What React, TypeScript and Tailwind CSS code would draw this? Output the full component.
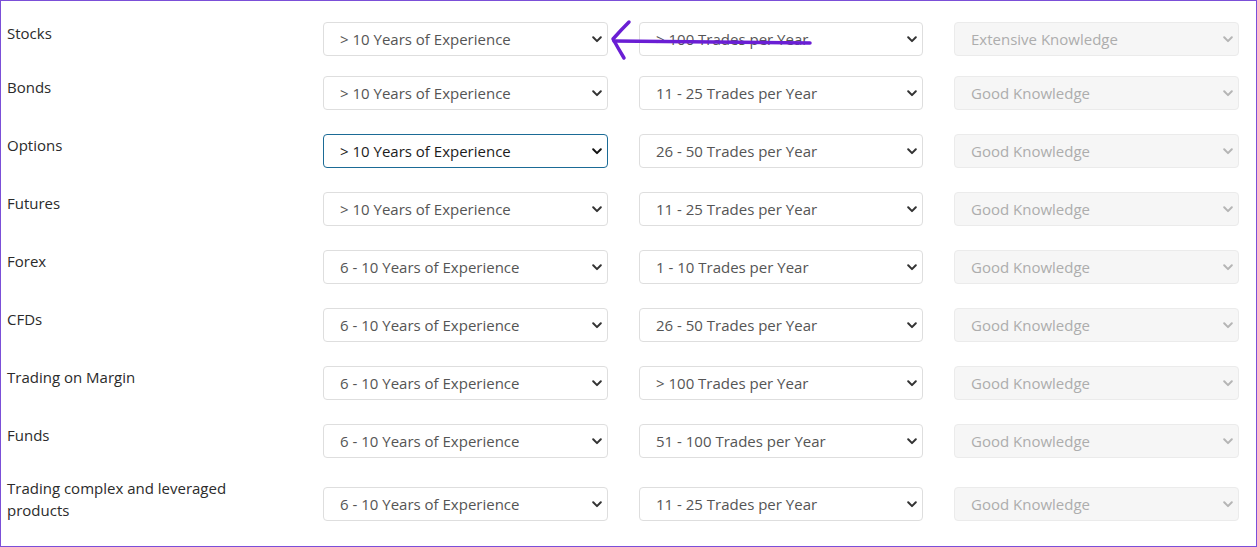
import React from 'react'

type Row = {
  label: string
  exp: string
  trades: string
  knowledge: string
  focused?: boolean
  rowClass?: string
  selectClass?: string
}

const rows: Row[] = [
  { label: 'Stocks', exp: '> 10 Years of Experience', trades: '> 100 Trades per Year', knowledge: 'Extensive Knowledge' },
  { label: 'Bonds', exp: '> 10 Years of Experience', trades: '11 - 25 Trades per Year', knowledge: 'Good Knowledge', rowClass: '-mt-1' },
  { label: 'Options', exp: '> 10 Years of Experience', trades: '26 - 50 Trades per Year', knowledge: 'Good Knowledge', focused: true },
  { label: 'Futures', exp: '> 10 Years of Experience', trades: '11 - 25 Trades per Year', knowledge: 'Good Knowledge' },
  { label: 'Forex', exp: '6 - 10 Years of Experience', trades: '1 - 10 Trades per Year', knowledge: 'Good Knowledge' },
  { label: 'CFDs', exp: '6 - 10 Years of Experience', trades: '26 - 50 Trades per Year', knowledge: 'Good Knowledge' },
  { label: 'Trading on Margin', exp: '6 - 10 Years of Experience', trades: '> 100 Trades per Year', knowledge: 'Good Knowledge' },
  { label: 'Funds', exp: '6 - 10 Years of Experience', trades: '51 - 100 Trades per Year', knowledge: 'Good Knowledge' },
  {
    label: 'Trading complex and leveraged products',
    exp: '6 - 10 Years of Experience',
    trades: '11 - 25 Trades per Year',
    knowledge: 'Good Knowledge',
    rowClass: '-mt-[5px]',
    selectClass: 'mt-[10px]',
  },
]

function Chevron({ color }: { color: string }) {
  return (
    <svg width="10" height="7" viewBox="0 0 10 7" className="pointer-events-none absolute right-[6px] top-[14px]">
      <path d="M1.2 1.3 L5 5.1 L8.8 1.3" fill="none" stroke={color} strokeWidth="2" strokeLinecap="round" strokeLinejoin="round" />
    </svg>
  )
}

function Select({
  value,
  focused,
  disabled,
  className = '',
}: {
  value: string
  focused?: boolean
  disabled?: boolean
  className?: string
}) {
  const base =
    'h-[34px] w-full appearance-none rounded-[4px] border pl-4 pr-6 text-[15px] leading-[32px] outline-none'
  const tone = disabled
    ? 'border-[#ebebeb] bg-[#f6f6f6] text-[#adadad]'
    : focused
      ? 'border-[#1b6b96] bg-white text-[#1c1c1c]'
      : 'border-[#dedede] bg-white text-[#555]'
  return (
    <div className={`relative ${className}`}>
      <select defaultValue={value} disabled={disabled} className={`${base} ${tone}`}>
        <option>{value}</option>
      </select>
      <Chevron color={disabled ? '#b5b5b5' : focused ? '#111' : '#333'} />
    </div>
  )
}

export default function App() {
  return (
    <div
      className="relative h-[547px] w-[1257px] overflow-hidden border border-[#7b4fd8] bg-white pl-[6px] pt-[21px]"
      style={{ fontFamily: '"Open Sans", "Liberation Sans", sans-serif' }}
    >
      <div className="flex flex-col gap-6">
        {rows.map((r) => (
          <div
            key={r.label}
            className={`grid grid-cols-[285px_285px_284px_285px] items-start gap-x-[31px] ${r.rowClass ?? ''}`}
          >
            <div className="max-w-[240px] text-[15px] leading-[22px] text-[#2b2b2b]">{r.label}</div>
            <Select value={r.exp} focused={r.focused} className={r.selectClass} />
            <Select value={r.trades} className={r.selectClass} />
            <Select value={r.knowledge} disabled className={r.selectClass} />
          </div>
        ))}
      </div>

      {/* hand-drawn annotation arrow */}
      <svg className="pointer-events-none absolute left-0 top-0" width="1257" height="547">
        <g fill="none" stroke="#6a1ed4" strokeWidth="3.5" strokeLinecap="round" strokeLinejoin="round">
          <path d="M628 21 Q620 29 612 38 Q617 47 623 57" />
          <path d="M613 40 Q700 41 809 42" />
        </g>
      </svg>
    </div>
  )
}
